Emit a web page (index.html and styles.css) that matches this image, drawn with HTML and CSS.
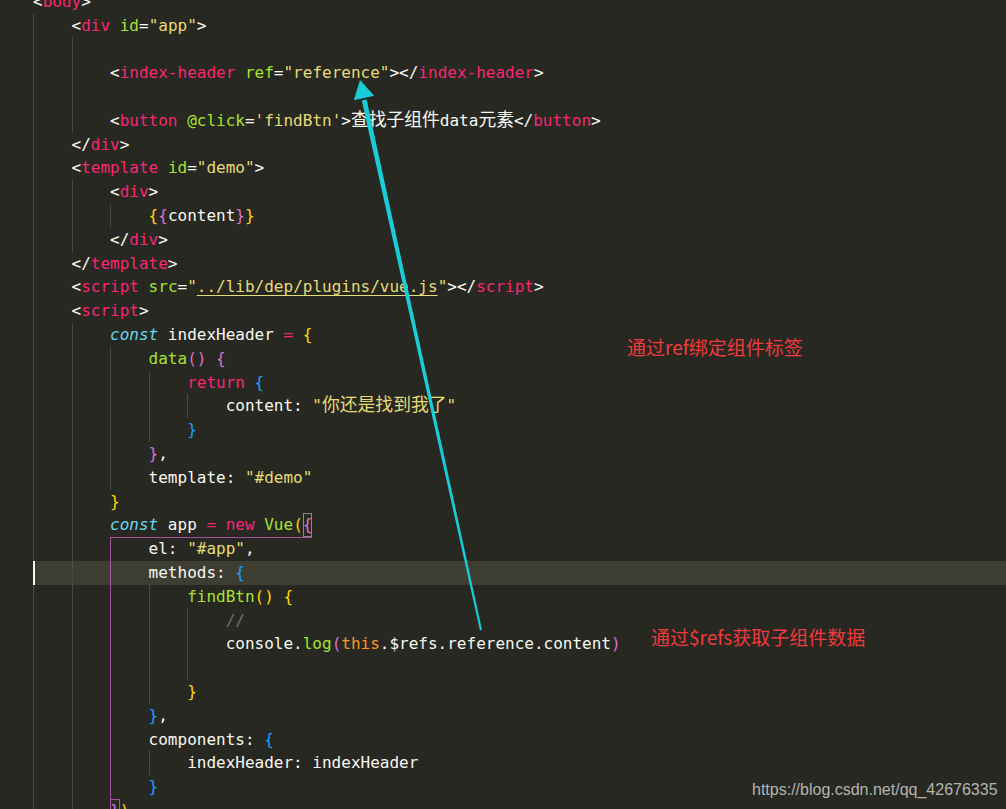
FILE: index.html
```html
<!DOCTYPE html>
<html>
<head>
<meta charset="utf-8">
<link rel="stylesheet" href="styles.css">
</head>
<body>
<div class="editor">
  <div class="code">
    <div class="ln">&lt;<span class="t">body</span>&gt;</div>
    <div class="ln"><i class="g"></i>&lt;<span class="t">div</span> <span class="a">id</span>=<span class="s">"app"</span>&gt;</div>
    <div class="ln"><i class="g"></i><i class="g"></i></div>
    <div class="ln"><i class="g"></i><i class="g"></i>&lt;<span class="t">index-header</span> <span class="a">ref</span>=<span class="s">"reference"</span>&gt;&lt;/<span class="t">index-header</span>&gt;</div>
    <div class="ln"><i class="g"></i><i class="g"></i></div>
    <div class="ln"><i class="g"></i><i class="g"></i>&lt;<span class="t">button</span> <span class="a">@click</span>=<span class="s">'findBtn'</span>&gt;<span class="cjk">查找子组件</span>data<span class="cjk">元素</span>&lt;/<span class="t">button</span>&gt;</div>
    <div class="ln"><i class="g"></i>&lt;/<span class="t">div</span>&gt;</div>
    <div class="ln"><i class="g"></i>&lt;<span class="t">template</span> <span class="a">id</span>=<span class="s">"demo"</span>&gt;</div>
    <div class="ln"><i class="g"></i><i class="g"></i>&lt;<span class="t">div</span>&gt;</div>
    <div class="ln"><i class="g"></i><i class="g"></i><i class="g"></i><span class="b1">{</span><span class="b2">{</span>content<span class="b2">}</span><span class="b1">}</span></div>
    <div class="ln"><i class="g"></i><i class="g"></i>&lt;/<span class="t">div</span>&gt;</div>
    <div class="ln"><i class="g"></i>&lt;/<span class="t">template</span>&gt;</div>
    <div class="ln"><i class="g"></i>&lt;<span class="t">script</span> <span class="a">src</span>=<span class="s">"<span class="ul">../lib/dep/plugins/vue.js</span>"</span>&gt;&lt;/<span class="t">script</span>&gt;</div>
    <div class="ln"><i class="g"></i>&lt;<span class="t">script</span>&gt;</div>
    <div class="ln"><i class="g"></i><i class="g"></i><span class="c">const</span> indexHeader <span class="k">=</span> <span class="b1">{</span></div>
    <div class="ln"><i class="g"></i><i class="g"></i><i class="g"></i><span class="f">data</span><span class="b2">()</span> <span class="b2">{</span></div>
    <div class="ln"><i class="g"></i><i class="g"></i><i class="g"></i><i class="g"></i><span class="k">return</span> <span class="b3">{</span></div>
    <div class="ln"><i class="g"></i><i class="g"></i><i class="g"></i><i class="g"></i><i class="g"></i>content: <span class="s">"<span class="cjk">你还是找到我了</span>"</span></div>
    <div class="ln"><i class="g"></i><i class="g"></i><i class="g"></i><i class="g"></i><span class="b3">}</span></div>
    <div class="ln"><i class="g"></i><i class="g"></i><i class="g"></i><span class="b2">}</span>,</div>
    <div class="ln"><i class="g"></i><i class="g"></i><i class="g"></i>template: <span class="s">"#demo"</span></div>
    <div class="ln"><i class="g"></i><i class="g"></i><span class="b1">}</span></div>
    <div class="ln"><i class="g"></i><i class="g"></i><span class="c">const</span> app <span class="k">=</span> <span class="k">new</span> <span class="f">Vue</span><span class="b1">(</span><span class="b2 box">{</span></div>
    <div class="ln"><i class="g"></i><i class="g"></i><i class="g"></i>el: <span class="s">"#app"</span>,</div>
    <div class="ln hl"><i class="g caret"></i><i class="g"></i><i class="g"></i>methods: <span class="b3">{</span></div>
    <div class="ln"><i class="g"></i><i class="g"></i><i class="g"></i><i class="g"></i><span class="f">findBtn</span><span class="b1">()</span> <span class="b1">{</span></div>
    <div class="ln"><i class="g"></i><i class="g"></i><i class="g"></i><i class="g"></i><i class="g"></i><span class="cm">//</span></div>
    <div class="ln"><i class="g"></i><i class="g"></i><i class="g"></i><i class="g"></i><i class="g"></i>console.<span class="f">log</span><span class="b2">(</span><span class="o">this</span>.$refs.reference.content<span class="b2">)</span></div>
    <div class="ln"><i class="g"></i><i class="g"></i><i class="g"></i><i class="g"></i><i class="g"></i></div>
    <div class="ln"><i class="g"></i><i class="g"></i><i class="g"></i><i class="g"></i><span class="b1">}</span></div>
    <div class="ln"><i class="g"></i><i class="g"></i><i class="g"></i><span class="b3">}</span>,</div>
    <div class="ln"><i class="g"></i><i class="g"></i><i class="g"></i>components: <span class="b3">{</span></div>
    <div class="ln"><i class="g"></i><i class="g"></i><i class="g"></i><i class="g"></i>indexHeader: indexHeader</div>
    <div class="ln"><i class="g"></i><i class="g"></i><i class="g"></i><span class="b3">}</span></div>
    <div class="ln"><i class="g"></i><i class="g"></i><span class="b2 box2">}</span><span class="b1">)</span></div>
    <div class="match"></div>
  </div>

  <div class="note note1">通过ref绑定组件标签</div>
  <div class="note note2">通过$refs获取子组件数据</div>
  <div class="wm">https://blog.csdn.net/qq_42676335</div>

  <svg class="arrow" width="1006" height="809" viewBox="0 0 1006 809">
    <polygon fill="#19ccd8" points="482,630 480,630.4 361.8,100.5 366.6,99.5"/>
    <polygon fill="#19ccd8" points="360,80 374.2,95.8 353.8,100.2"/>
  </svg>
</div>
</body>
</html>
```

FILE: styles.css
```css
html, body {
  margin: 0;
  padding: 0;
  background: #272822;
}

.editor {
  position: relative;
  width: 1006px;
  height: 809px;
  overflow: hidden;
  background: #272822;
}

.code {
  position: relative;
  margin-top: -10.2px;
  font-family: "DejaVu Sans Mono", "Liberation Mono", "Noto Sans CJK SC", monospace;
  font-size: 16px;
  color: #f8f8f2;
}

.ln {
  margin-left: 33px;
  height: 23.8px;
  line-height: 23.8px;
  white-space: pre;
}

.ln.hl {
  background: #3e3d32;
}

.g {
  display: inline-block;
  width: 4ch;
  height: 23.8px;
  vertical-align: top;
  box-shadow: inset 1px 0 0 #4a4a43;
}

.g.caret {
  box-shadow: inset 2px 0 0 #f8f8f0;
}

.t { color: #f92672; }
.a { color: #a6e22e; }
.s { color: #e6db74; }
.k { color: #f92672; }
.c { color: #66d9ef; font-style: italic; }
.f { color: #a6e22e; }
.o { color: #fd971f; }
.cm { color: #75715e; }
.b1 { color: #ffd700; }
.b2 { color: #da70d6; }
.b3 { color: #179fff; }

.ul {
  text-decoration: underline;
  text-decoration-color: #e6db74;
  text-underline-offset: 3px;
}

.cjk {
  font-family: "Noto Sans CJK SC", sans-serif;
  font-size: 17.8px;
  line-height: 0;
}

.box {
  display: inline-block;
  height: 23.8px;
  vertical-align: top;
  box-shadow: inset 0 0 0 1px #8a8a84;
}

.box2 {
  display: inline-block;
  height: 23.8px;
  vertical-align: top;
  box-shadow: inset 0 0 0 1px #a0549b;
}

.match {
  position: absolute;
  left: 110px;
  top: 547.4px;
  width: 202px;
  height: 261.8px;
  border-top: 1px solid #a0549b;
  border-left: 1px solid #a0549b;
  box-sizing: border-box;
}

.note {
  position: absolute;
  font-family: "Noto Sans CJK SC", sans-serif;
  font-size: 19px;
  line-height: 19px;
  color: #f03a3d;
  white-space: nowrap;
}

.note1 {
  left: 627px;
  top: 336.5px;
}

.note2 {
  left: 651px;
  top: 626.5px;
}

.wm {
  position: absolute;
  left: 752px;
  top: 782px;
  font-family: "Liberation Sans", Arial, sans-serif;
  font-size: 16px;
  line-height: 16px;
  color: #b4b4b0;
  white-space: nowrap;
}

.arrow {
  position: absolute;
  left: 0;
  top: 0;
  pointer-events: none;
}
```
